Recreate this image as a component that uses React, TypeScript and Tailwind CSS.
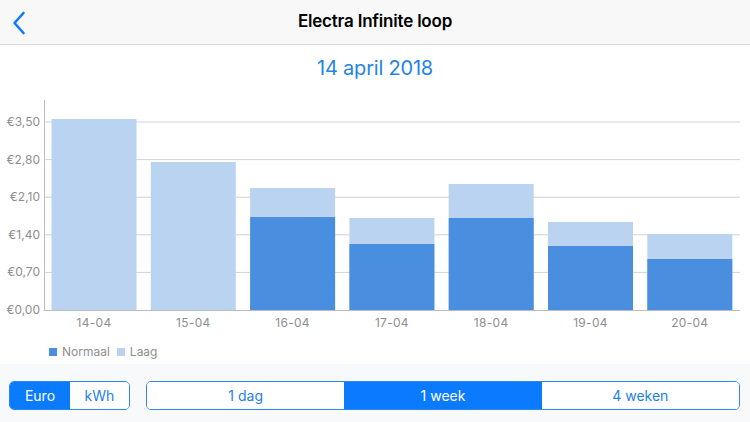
import React from "react";

const bars = [
  { label: "14-04", light: 119, dark: null as number | null },
  { label: "15-04", light: 162, dark: null },
  { label: "16-04", light: 188, dark: 217 },
  { label: "17-04", light: 218, dark: 244 },
  { label: "18-04", light: 184, dark: 218 },
  { label: "19-04", light: 222, dark: 246 },
  { label: "20-04", light: 234, dark: 259 },
];

const ticks = ["€0,00", "€0,70", "€1,40", "€2,10", "€2,80", "€3,50"];

function Chart() {
  const off = 90;
  const base = 310 - off;
  return (
    <svg width={750} height={245} className="block" style={{ fontFamily: "Inter, 'Noto Sans', sans-serif" }}>
      {ticks.map((t, i) => {
        const y = base - i * 37.6;
        return (
          <g key={t}>
            {i > 0 && <line x1={44} x2={740} y1={y} y2={y} stroke="#d3d3d3" strokeWidth={1} />}
            <text x={40} y={y + 4} textAnchor="end" fontSize={12} fill="#8e8e8e">
              {t}
            </text>
          </g>
        );
      })}
      {bars.map((b, i) => {
        const x = 44 + 7.5 + i * 99.3;
        const lt = b.light - off;
        const dt = b.dark != null ? b.dark - off : null;
        return (
          <g key={b.label}>
            <rect x={x} y={lt} width={85} height={base - lt} fill="#bad3f1" />
            {dt != null && <rect x={x} y={dt} width={85} height={base - dt} fill="#4a8fdf" />}
            <text x={x + 42.5} y={base + 17} textAnchor="middle" fontSize={12} fill="#8e8e8e" letterSpacing={0.3}>
              {b.label}
            </text>
          </g>
        );
      })}
      <line x1={44.5} x2={44.5} y1={10} y2={base} stroke="#bdbdbd" strokeWidth={1} />
      <line x1={44} x2={740} y1={base + 0.5} y2={base + 0.5} stroke="#bdbdbd" strokeWidth={1} />
    </svg>
  );
}

export default function App() {
  return (
    <div className="w-[750px] h-[422px] bg-white overflow-hidden flex flex-col" style={{ fontFamily: "Inter, 'Noto Sans', sans-serif" }}>
      <div className="h-[45px] bg-[#f8f8f8] border-b border-[#dcdcdc] relative flex items-center justify-center shrink-0">
        <svg className="absolute left-[12px] top-[11px]" width={14} height={24} viewBox="0 0 14 24">
          <path d="M11.5 2 L2.5 12 L11.5 22" fill="none" stroke="#0a7aff" strokeWidth={2.6} strokeLinecap="round" strokeLinejoin="round" />
        </svg>
        <span className="text-[17px] font-semibold text-black tracking-[-0.2px]">Electra Infinite loop</span>
      </div>
      <div className="h-[45px] flex items-center justify-center shrink-0">
        <span className="text-[20px] text-[#1f84e6] tracking-[-0.2px]">14 april 2018</span>
      </div>
      <Chart />
      <div className="h-[29px] flex items-center pl-[49px] pt-[4px] gap-[5px] text-[12px] text-[#8e8e8e] shrink-0">
        <span className="w-[8px] h-[8px] bg-[#4a8fdf]" />
        <span>Normaal</span>
        <span className="w-[8px] h-[8px] bg-[#bad3f1] ml-[2px]" />
        <span>Laag</span>
      </div>
      <div className="flex-1 bg-[#f8f9fa] flex items-start pt-[17px] pl-[9px] gap-[16px]">
        <div className="flex h-[29px] w-[121px] border border-[#2f88f0] rounded-[5px] overflow-hidden text-[14px]">
          <div className="w-[60px] bg-[#0a7aff] text-white flex items-center justify-center">Euro</div>
          <div className="flex-1 bg-white text-[#1f7fe8] flex items-center justify-center">kWh</div>
        </div>
        <div className="flex h-[29px] w-[594px] border border-[#2f88f0] rounded-[5px] overflow-hidden text-[14px]">
          <div className="flex-1 bg-white text-[#1f7fe8] flex items-center justify-center">1 dag</div>
          <div className="flex-1 bg-[#0a7aff] text-white flex items-center justify-center">1 week</div>
          <div className="flex-1 bg-white text-[#1f7fe8] flex items-center justify-center">4 weken</div>
        </div>
      </div>
    </div>
  );
}
